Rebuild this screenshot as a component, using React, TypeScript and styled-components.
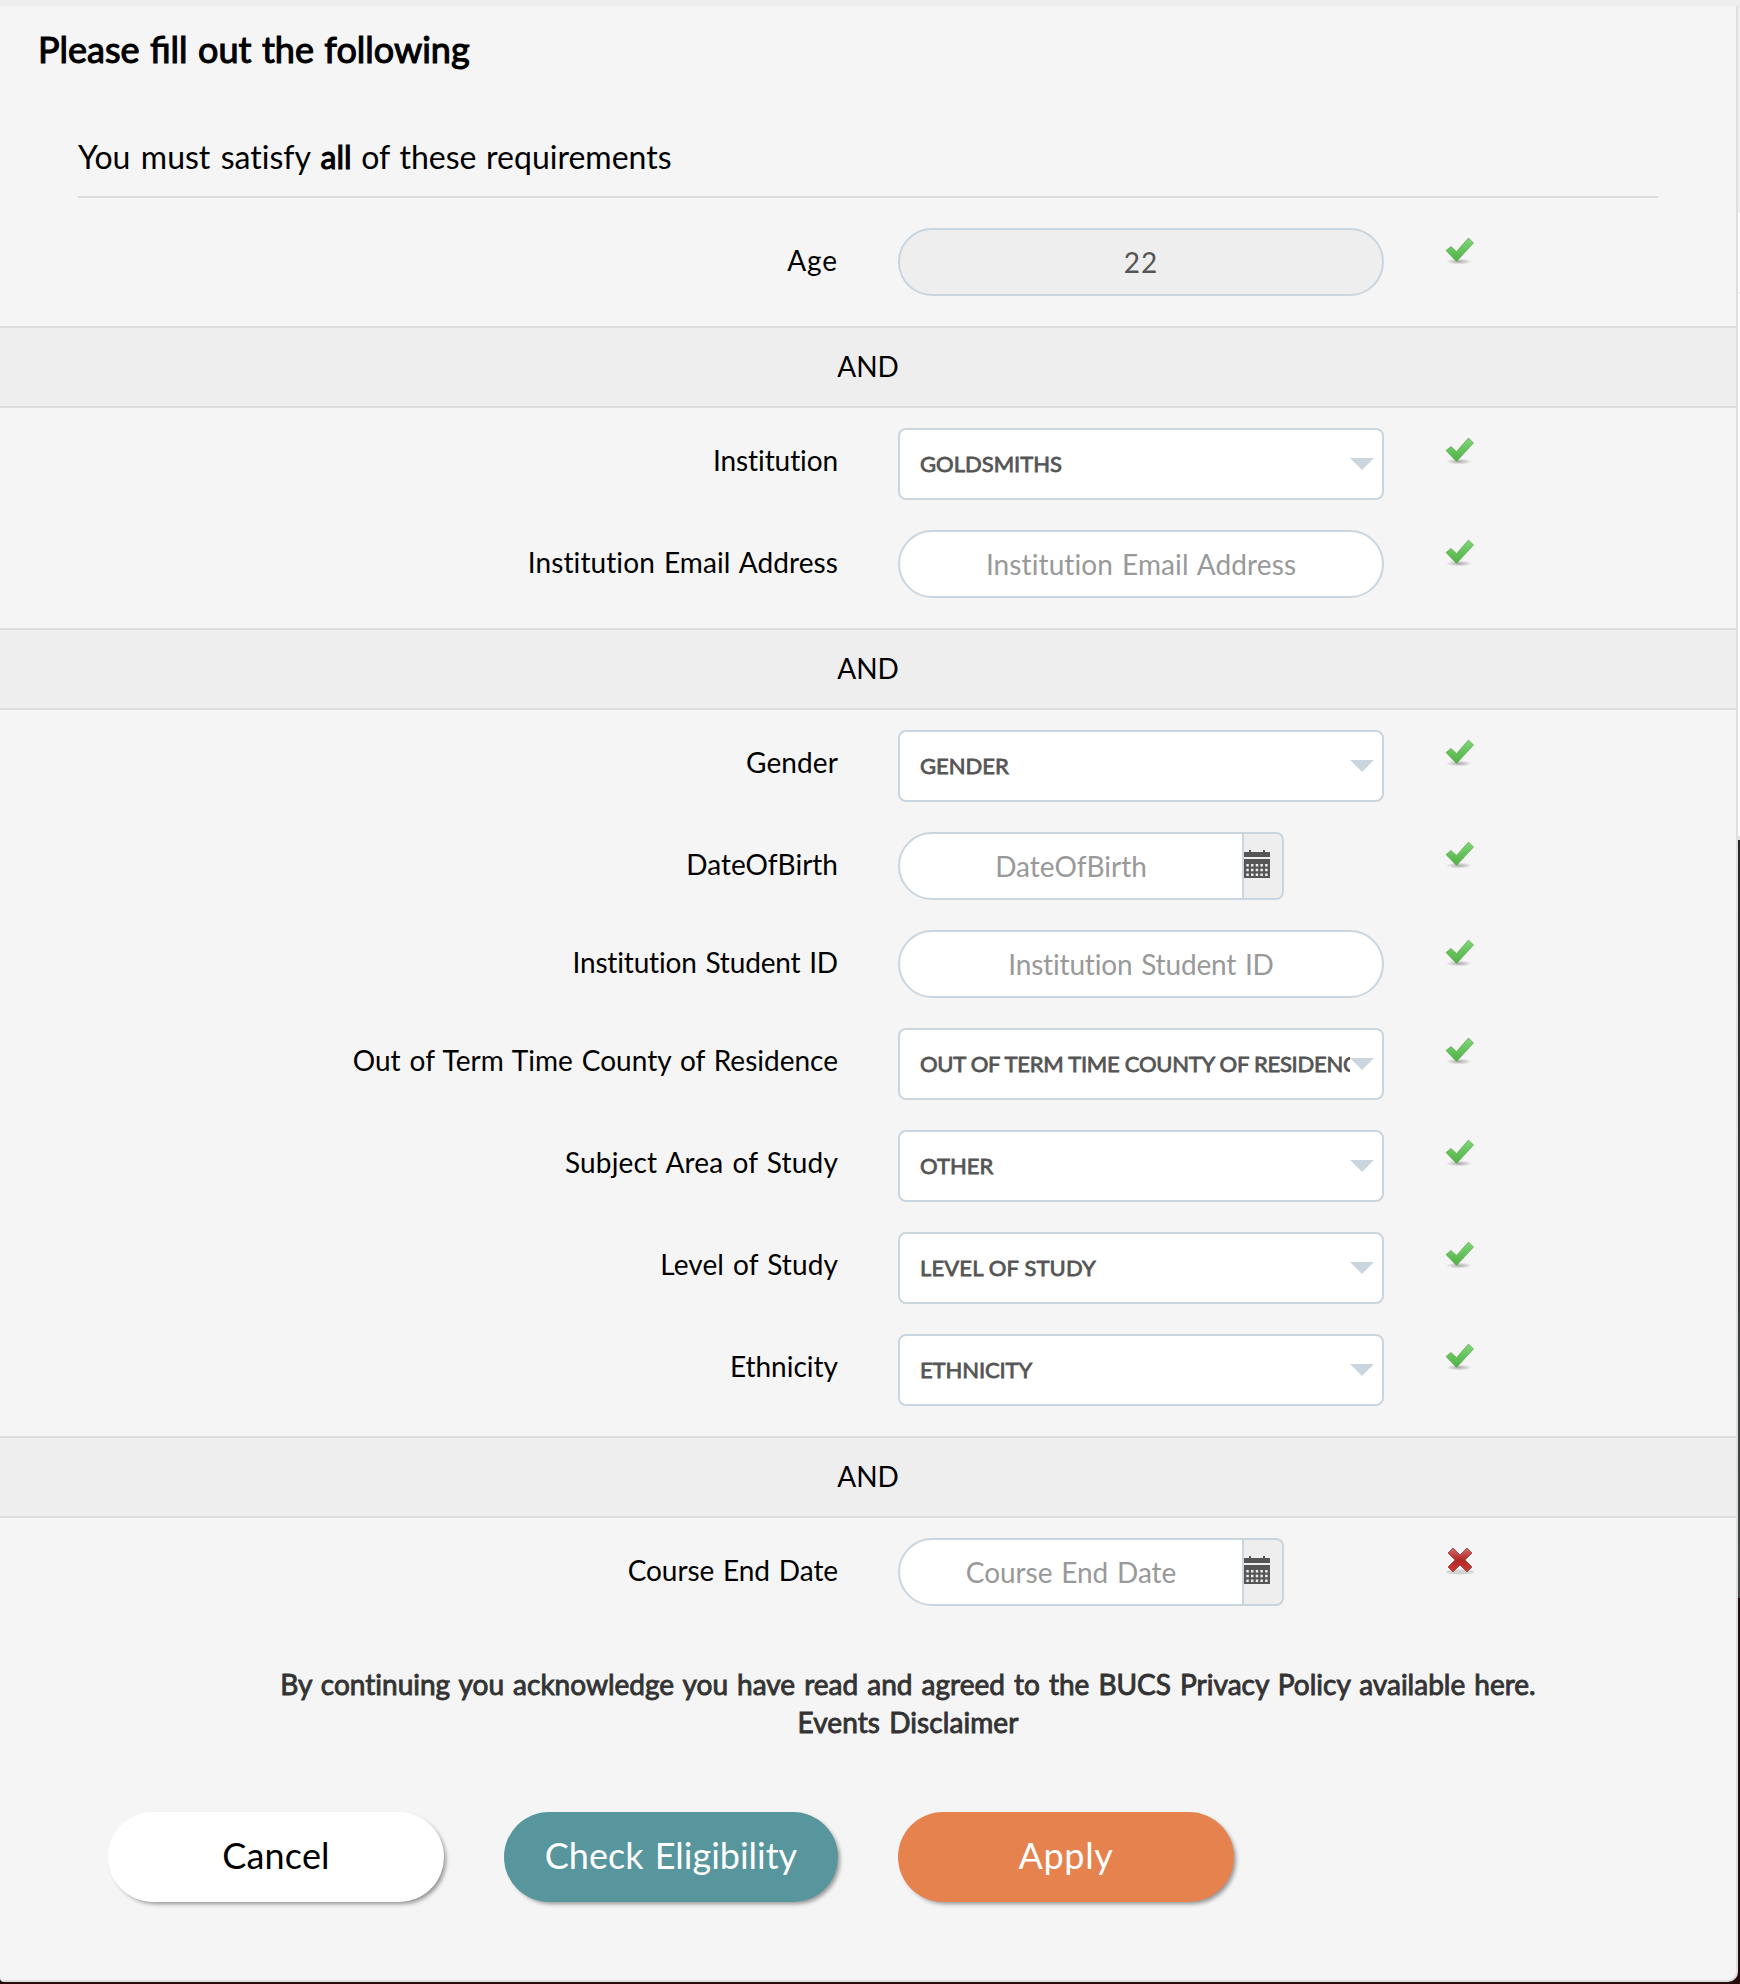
import React from "react";
import styled, { createGlobalStyle, css } from "styled-components";

const Global = createGlobalStyle`
  * { box-sizing: border-box; }
  body { margin: 0; background: #eeeeee; font-family: Lato, "Noto Sans", sans-serif; color: #000; }
`;

const Page = styled.div`
  display: flex;
  width: 1740px;
  height: 1984px;
  padding-top: 6px;
  overflow: hidden;
  background: linear-gradient(to bottom, #eeeeee 213px, #ffffff 213px 292px, #eeeeee 292px 294px, #ffffff 294px 836px, #e2e2e2 836px 840px, #262626 840px, #444848 1598px, #280a0c 1598px);
`;
const Panel = styled.main`
  width: 1738px;
  height: 1976px;
  background: #f5f5f5;
  border-right: 2px solid #dfdfdf;
  border-bottom: 2px solid #dfe1e1;
  border-radius: 0 0 10px 4px;
`;
const Text = styled.span<{ $ls?: number; $ws?: number; $lig?: boolean }>`
  display: inline-block;
  white-space: pre;
  letter-spacing: ${(p) => p.$ls ?? 0}px;
  word-spacing: ${(p) => p.$ws ?? 0}px;
  font-variant-ligatures: ${(p) => (p.$lig ? "normal" : "none")};
`;
const Title = styled.h1`
  margin: 0;
  height: 110px;
  padding: 21px 0 0 38px;
  font-size: 36px;
  line-height: 44px;
  font-weight: 400;
  -webkit-text-stroke: 1.1px #000;
`;
const Intro = styled.div`
  margin: 0 78px;
  height: 82px;
  padding-top: 21px;
  border-bottom: 2px solid #dddddd;
  font-size: 32px;
  line-height: 40px;
`;
const Strong = styled.b`
  font-weight: 400;
  -webkit-text-stroke: 1.1px #000;
`;
const Group = styled.section<{ $first?: boolean }>`
  display: flex;
  flex-direction: column;
  gap: 30px;
  padding: ${(p) => (p.$first ? 30 : 20)}px 0 30px;
`;
const Row = styled.div`
  display: grid;
  grid-template-columns: 838px 486px 40px;
  column-gap: 60px;
  align-items: start;
`;
const Label = styled.label`
  text-align: right;
  font-size: 28px;
  line-height: 34px;
  padding-top: 15px;
`;
const And = styled.div`
  height: 82px;
  border: solid #dddddd;
  border-width: 2px 0;
  background: #eeeeee;
  text-align: center;
  font-size: 28px;
  line-height: 76px;
`;
const pill = css`
  height: 68px;
  border: 2px solid #cad5de;
  text-align: center;
  font-size: 28px;
  line-height: 65px;
`;
const Field = styled.div<{ $readonly?: boolean }>`
  ${pill}
  border-radius: 34px;
  background: ${(p) => (p.$readonly ? "#eeeeee" : "#ffffff")};
  color: ${(p) => (p.$readonly ? "#555555" : "#999999")};
`;
const DateWrap = styled.div`
  display: flex;
`;
const DateField = styled.div`
  ${pill}
  width: 346px;
  border-radius: 34px 0 0 34px;
  background: #ffffff;
  color: #999999;
`;
const Addon = styled.div`
  width: 40px;
  height: 68px;
  border: 2px solid #cad5de;
  border-left: 0;
  border-radius: 0 8px 8px 0;
  background: #eeeeee;
  padding-top: 16px;
  svg { display: block; }
`;
const SelectBox = styled.div`
  display: flex;
  align-items: center;
  height: 72px;
  border: 2px solid #cad5de;
  border-radius: 8px;
  background: #ffffff;
  color: #555555;
  padding: 0 8px 1px 20px;
  font-size: 22px;
  -webkit-text-stroke: 0.8px #555555;
`;
const SelectText = styled.div`
  flex: 1;
  overflow: hidden;
  line-height: 34px;
`;
const Arrow = styled.i`
  border: solid transparent;
  border-width: 12px 12px 0;
  border-top-color: #cad5de;
`;
const Mark = styled.div`
  padding-top: 8px;
  svg { display: block; }
`;
const Notice = styled.p`
  margin: 29px 0 0 80px;
  text-align: center;
  color: #333333;
  font-size: 28px;
  line-height: 38px;
  -webkit-text-stroke: 0.9px #333333;
`;
const Actions = styled.div`
  display: flex;
  gap: 60px;
  padding: 71px 0 0 108px;
`;
const Button = styled.button<{ $bg: string; $fg: string; $w: number }>`
  width: ${(p) => p.$w}px;
  height: 90px;
  padding: 0 0 4px;
  border: 0;
  border-radius: 45px;
  background: ${(p) => p.$bg};
  color: ${(p) => p.$fg};
  font: 400 36px/44px Lato, "Noto Sans", sans-serif;
  box-shadow: 3px 3px 4px -1px rgba(0, 0, 0, 0.4);
`;

const Tick = () => (
  <svg width="32" height="32" viewBox="0 0 32 32">
    <defs>
      <linearGradient id="tick" x1="0" y1="0" x2="0" y2="1">
        <stop offset="0" stopColor="#80d676" />
        <stop offset="1" stopColor="#4fb045" />
      </linearGradient>
      <radialGradient id="shade">
        <stop offset="0" stopColor="#777" stopOpacity=".6" />
        <stop offset="1" stopColor="#777" stopOpacity="0" />
      </radialGradient>
    </defs>
    <ellipse cx="15" cy="25.500" rx="13" ry="3" fill="url(#shade)" />
    <path d="M2 14.500 7 10.500 12.500 15.500 24.500 2 29.500 7 12.500 25.500Z" fill="url(#tick)" stroke="#5fa856" strokeOpacity=".7" strokeLinejoin="round" />
  </svg>
);

const Cross = () => (
  <svg width="32" height="32" viewBox="0 0 32 32">
    <defs>
      <linearGradient id="cross" x1="0" y1="0" x2="0" y2="1">
        <stop offset="0" stopColor="#dd6b68" />
        <stop offset=".5" stopColor="#ae2a26" />
        <stop offset="1" stopColor="#d23a32" />
      </linearGradient>
    </defs>
    <ellipse cx="16" cy="26" rx="14" ry="2.500" fill="#999" opacity=".35" />
    <path d="M9 2 16 9 23 2 28 7 21 14 28 21 23 26 16 19 9 26 4 21 11 14 4 7Z" fill="url(#cross)" stroke="#9b5653" strokeLinejoin="round" />
  </svg>
);

const Calendar = () => (
  <svg width="26" height="28" viewBox="0 0 26 28" fill="#555555">
    <path d="M0 2H5V0H7V2H19V0H21V2H26V7H0Z" />
    <path fillRule="evenodd" d="M0 9H26V28H0ZM2.300 14V16.500H4.800V14ZM7 14V16.500H9.500V14ZM11.700 14V16.500H14.200V14ZM16.400 14V16.500H18.900V14ZM21.100 14V16.500H23.600V14ZM2.300 18.700V21.200H4.800V18.700ZM7 18.700V21.200H9.500V18.700ZM11.700 18.700V21.200H14.200V18.700ZM16.400 18.700V21.200H18.900V18.700ZM21.100 18.700V21.200H23.600V18.700ZM2.300 23.400V25.900H4.800V23.400ZM7 23.400V25.900H9.500V23.400ZM11.700 23.400V25.900H14.200V23.400ZM16.400 23.400V25.900H18.900V23.400ZM21.100 23.400V25.900H23.600V23.400Z" />
  </svg>
);

type Item = {
  label: string;
  ls?: number;
  kind: "text" | "select" | "date";
  value?: string;
  vls?: number;
  readonly?: boolean;
  bad?: boolean;
};

const groups: Item[][] = [
  [{ label: "Age", ls: 0.9, kind: "text", value: "22", readonly: true }],
  [
    { label: "Institution", ls: -0.1, kind: "select", value: "GOLDSMITHS" },
    { label: "Institution Email Address", ls: 0.1, kind: "text" },
  ],
  [
    { label: "Gender", ls: 0.1, kind: "select", value: "GENDER" },
    { label: "DateOfBirth", kind: "date" },
    { label: "Institution Student ID", ls: -0.17, kind: "text" },
    { label: "Out of Term Time County of Residence", kind: "select", value: "OUT OF TERM TIME COUNTY OF RESIDENCE", vls: -0.25 },
    { label: "Subject Area of Study", ls: 0.17, kind: "select", value: "OTHER" },
    { label: "Level of Study", ls: 0.1, kind: "select", value: "LEVEL OF STUDY", vls: 0.15 },
    { label: "Ethnicity", kind: "select", value: "ETHNICITY", vls: -0.1 },
  ],
  [{ label: "Course End Date", ls: -0.07, kind: "date", bad: true }],
];

const Control = ({ item }: { item: Item }) => {
  if (item.kind === "select")
    return (
      <SelectBox>
        <SelectText><Text $ls={item.vls}>{item.value}</Text></SelectText>
        <Arrow />
      </SelectBox>
    );
  if (item.kind === "date")
    return (
      <DateWrap>
        <DateField><Text $ls={item.ls} $ws={1.8}>{item.label}</Text></DateField>
        <Addon><Calendar /></Addon>
      </DateWrap>
    );
  return <Field $readonly={item.readonly}><Text $ls={item.ls} $ws={1.8}>{item.value ?? item.label}</Text></Field>;
};

export default function App() {
  return (
    <>
      <Global />
      <Page>
        <Panel>
          <Title><Text $ws={1.25} $lig>Please fill out the following</Text></Title>
          <Intro><Text $ws={2.2}>You must satisfy </Text><Strong><Text>all</Text></Strong><Text $ws={1.5}> of these requirements</Text></Intro>
          {groups.map((items, i) => (
            <React.Fragment key={i}>
              {i > 0 && <And><Text>AND</Text></And>}
              <Group $first={i === 0}>
                {items.map((item) => (
                  <Row key={item.label}>
                    <Label><Text $ls={item.ls} $ws={1.8}>{item.label}</Text></Label>
                    <Control item={item} />
                    <Mark>{item.bad ? <Cross /> : <Tick />}</Mark>
                  </Row>
                ))}
              </Group>
            </React.Fragment>
          ))}
          <Notice>
            <Text $ws={1.9}>By continuing you acknowledge you have read and agreed to the BUCS Privacy Policy available here.</Text>
            <br />
            <Text $ls={0.08} $ws={1.9}>Events Disclaimer</Text>
          </Notice>
          <Actions>
            <Button $w={336} $bg="#ffffff" $fg="#000000"><Text $ls={0.2}>Cancel</Text></Button>
            <Button $w={334} $bg="#58969d" $fg="#ffffff"><Text $ws={2}>Check Eligibility</Text></Button>
            <Button $w={336} $bg="#e5824e" $fg="#ffffff"><Text $ls={0.7}>Apply</Text></Button>
          </Actions>
        </Panel>
      </Page>
    </>
  );
}
